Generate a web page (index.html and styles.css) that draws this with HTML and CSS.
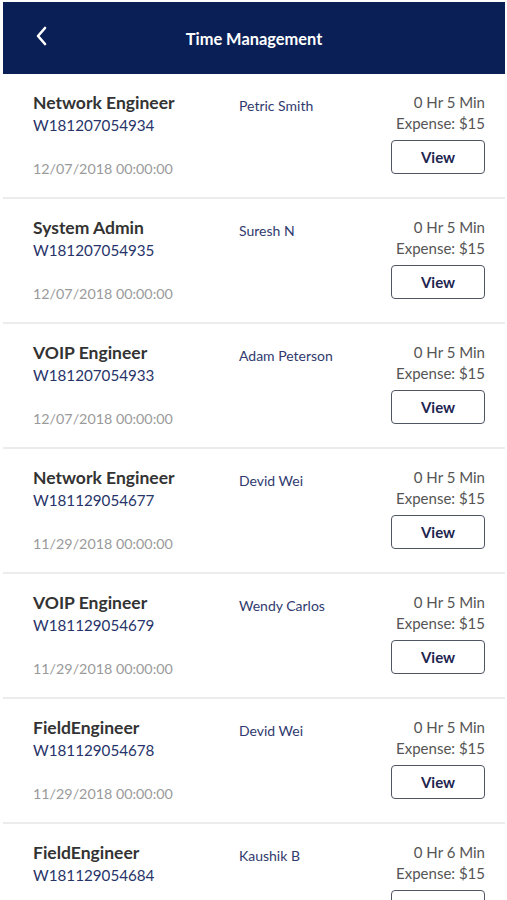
FILE: index.html
```html
<!DOCTYPE html>
<html lang="en">
    <head>
        <meta charset="UTF-8" />
        <meta name="viewport" content="width=device-width, initial-scale=1.0" />
        <title>Time Management</title>
        <link rel="stylesheet" href="styles.css">
    </head>

    <body>
        <div class="header">
            <a class="back" href="#">
                <svg width="14" height="22" viewBox="0 0 14 22">
                    <path d="M11 3 L4 11 L11 19" fill="none" stroke="#fff" stroke-width="2.6" stroke-linecap="round" stroke-linejoin="round" />
                </svg>
            </a>
            <h1>Time Management</h1>
        </div>

        <ul class="list">
            <li class="row">
                <div class="left">
                    <h2>Network Engineer</h2>
                    <p class="code">W181207054934</p>
                    <p class="date">12/07/2018 00:00:00</p>
                </div>
                <div class="name">Petric Smith</div>
                <div class="right">
                    <p>0 Hr 5 Min</p>
                    <p>Expense: $15</p>
                    <a class="btn" href="#">View</a>
                </div>
            </li>
            <li class="row">
                <div class="left">
                    <h2>System Admin</h2>
                    <p class="code">W181207054935</p>
                    <p class="date">12/07/2018 00:00:00</p>
                </div>
                <div class="name">Suresh N</div>
                <div class="right">
                    <p>0 Hr 5 Min</p>
                    <p>Expense: $15</p>
                    <a class="btn" href="#">View</a>
                </div>
            </li>
            <li class="row">
                <div class="left">
                    <h2>VOIP Engineer</h2>
                    <p class="code">W181207054933</p>
                    <p class="date">12/07/2018 00:00:00</p>
                </div>
                <div class="name">Adam Peterson</div>
                <div class="right">
                    <p>0 Hr 5 Min</p>
                    <p>Expense: $15</p>
                    <a class="btn" href="#">View</a>
                </div>
            </li>
            <li class="row">
                <div class="left">
                    <h2>Network Engineer</h2>
                    <p class="code">W181129054677</p>
                    <p class="date">11/29/2018 00:00:00</p>
                </div>
                <div class="name">Devid Wei</div>
                <div class="right">
                    <p>0 Hr 5 Min</p>
                    <p>Expense: $15</p>
                    <a class="btn" href="#">View</a>
                </div>
            </li>
            <li class="row">
                <div class="left">
                    <h2>VOIP Engineer</h2>
                    <p class="code">W181129054679</p>
                    <p class="date">11/29/2018 00:00:00</p>
                </div>
                <div class="name">Wendy Carlos</div>
                <div class="right">
                    <p>0 Hr 5 Min</p>
                    <p>Expense: $15</p>
                    <a class="btn" href="#">View</a>
                </div>
            </li>
            <li class="row">
                <div class="left">
                    <h2>FieldEngineer</h2>
                    <p class="code">W181129054678</p>
                    <p class="date">11/29/2018 00:00:00</p>
                </div>
                <div class="name">Devid Wei</div>
                <div class="right">
                    <p>0 Hr 5 Min</p>
                    <p>Expense: $15</p>
                    <a class="btn" href="#">View</a>
                </div>
            </li>
            <li class="row">
                <div class="left">
                    <h2>FieldEngineer</h2>
                    <p class="code">W181129054684</p>
                    <p class="date">11/29/2018 00:00:00</p>
                </div>
                <div class="name">Kaushik B</div>
                <div class="right">
                    <p>0 Hr 6 Min</p>
                    <p>Expense: $15</p>
                    <a class="btn" href="#">View</a>
                </div>
            </li>
        </ul>
    </body>
</html>
```

FILE: styles.css
```css
html,
body {
    overflow: hidden;
}

body,
div,
h1,
h2,
p,
ul,
li {
    margin: 0;
    padding: 0;
}

body {
    height: 898px;
    background: #fff;
    color: #333;
    font: 15px/21px Lato, "Open Sans", sans-serif;
    padding: 2px 2px 0 3px;
}

.header {
    position: relative;
    height: 72px;
    background: #0a1f56;
    display: flex;
    align-items: center;
    justify-content: center;
}

.header h1 {
    color: #fff;
    font-size: 16.4px;
    font-weight: 700;
    margin-left: 0;
}

.back {
    position: absolute;
    left: 31px;
    top: 23px;
    display: block;
}

.list {
    list-style: none;
}

.row {
    display: flex;
    box-sizing: border-box;
    height: 125px;
    padding: 18px 20px 0 30px;
    border-bottom: 2px solid #ececec;
}

.left {
    width: 206px;
}

.left h2 {
    font-size: 17.5px;
    line-height: 22px;
    font-weight: 700;
    color: #333;
}

.code {
    font-size: 15.2px;
    line-height: 22px;
    color: #27346a;
}

.date {
    margin-top: 22px;
    font-size: 14.3px;
    line-height: 22px;
    color: #9a9a9a;
}

.name {
    flex: 1;
    margin-top: 4px;
    font-size: 14px;
    line-height: 20px;
    color: #303a6e;
}

.right {
    display: flex;
    flex-direction: column;
    align-items: flex-end;
    color: #555;
}

.btn {
    display: block;
    width: 92px;
    height: 32px;
    margin-top: 6px;
    border: 1.5px solid #505562;
    border-radius: 4px;
    text-align: center;
    font: 700 15px/32px Lato, sans-serif;
    color: #1d2550;
    text-decoration: none;
}
```
